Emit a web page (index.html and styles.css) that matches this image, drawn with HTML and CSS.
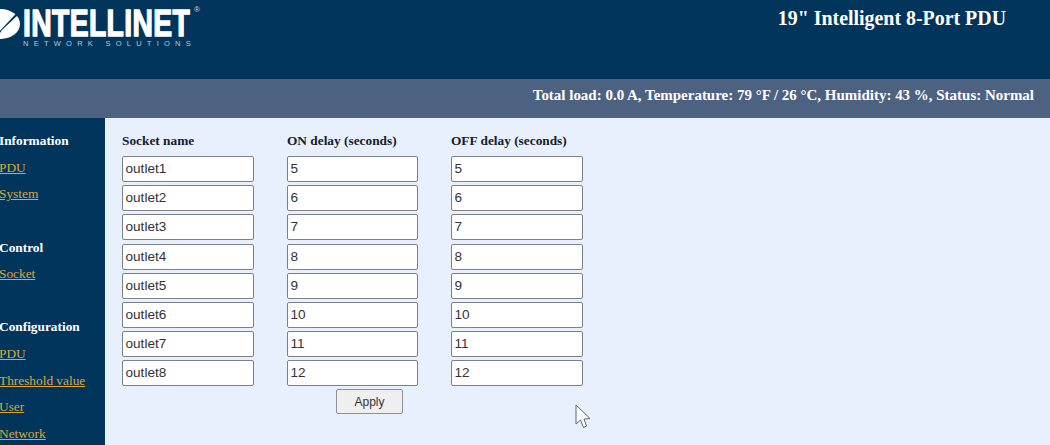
FILE: index.html
```html
<!DOCTYPE html>
<html lang="en">
<head>
<meta charset="utf-8">
<title>19" Intelligent 8-Port PDU</title>
<link rel="stylesheet" href="styles.css">
</head>
<body>
<header class="header">
  <div class="logo">
    <svg class="logo-mark" width="20" height="40" viewBox="0 0 20 40" aria-hidden="true">
      <ellipse cx="1" cy="24" rx="19" ry="15" fill="#fff"/>
      <path d="M-2 33 L18 11.5 L19 14 L2 30 L-2 36 Z" fill="#02355b"/>
    </svg>
    <div class="logo-text">
      <div class="logo-name">INTELLINET</div>
      <div class="logo-reg">®</div>
      <div class="logo-sub">NETWORK SOLUTIONS</div>
    </div>
  </div>
  <h1 class="title">19" Intelligent 8-Port PDU</h1>
</header>
<div class="status">Total load: 0.0 A, Temperature: 79 °F / 26 °C, Humidity: 43 %, Status: Normal</div>
<div class="body">
  <nav class="nav">
    <div class="nav-group">
      <div class="nav-head">Information</div>
      <a class="nav-link" href="#">PDU</a>
      <a class="nav-link" href="#">System</a>
    </div>
    <div class="nav-group">
      <div class="nav-head">Control</div>
      <a class="nav-link" href="#">Socket</a>
    </div>
    <div class="nav-group">
      <div class="nav-head">Configuration</div>
      <a class="nav-link" href="#">PDU</a>
      <a class="nav-link" href="#">Threshold value</a>
      <a class="nav-link" href="#">User</a>
      <a class="nav-link" href="#">Network</a>
    </div>
  </nav>
  <main class="main">
    <form class="grid">
      <div class="col-head">Socket name</div>
      <div class="col-head">ON delay (seconds)</div>
      <div class="col-head">OFF delay (seconds)</div>
      <input class="field" value="outlet1"><input class="field" value="5"><input class="field" value="5">
      <input class="field" value="outlet2"><input class="field" value="6"><input class="field" value="6">
      <input class="field" value="outlet3"><input class="field" value="7"><input class="field" value="7">
      <input class="field" value="outlet4"><input class="field" value="8"><input class="field" value="8">
      <input class="field" value="outlet5"><input class="field" value="9"><input class="field" value="9">
      <input class="field" value="outlet6"><input class="field" value="10"><input class="field" value="10">
      <input class="field" value="outlet7"><input class="field" value="11"><input class="field" value="11">
      <input class="field" value="outlet8"><input class="field" value="12"><input class="field" value="12">
      <div class="actions"><button class="apply" type="button">Apply</button></div>
    </form>
    <svg class="cursor" width="17" height="25" viewBox="0 0 17 25" aria-hidden="true">
      <path d="M1 1 L1 20 L5.5 16 L8.5 23.5 L11.5 22 L9 15 L15 14.5 Z" fill="#fff" stroke="#5f6670" stroke-width="1"/>
    </svg>
  </main>
</div>
</body>
</html>
```
FILE: styles.css
```css
* { box-sizing: border-box; }
html, body { margin: 0; height: 100%; overflow: hidden; }
body { font-family: "Liberation Serif", serif; background: #e8f0fd; display: flex; flex-direction: column; }

.header { height: 79px; background: #02355b; display: flex; justify-content: space-between; flex: none; }
.logo { display: flex; align-items: flex-start; height: 48px; }
.logo-mark { flex: none; }
.logo-text { margin-left: 3px; color: #fff; position: relative; width: 172px; }
.logo-name { font-family: "Liberation Sans", sans-serif; font-weight: 700; font-size: 36px; line-height: 28px; height: 28px; margin-top: 10px; width: 169px; white-space: nowrap; transform-origin: 0 50%; transform: scaleX(.785); -webkit-text-stroke: 1.4px #fff; letter-spacing: .5px; }
.logo-reg { position: absolute; left: 171px; top: 6px; font-family: "Liberation Sans", sans-serif; font-size: 8px; line-height: 8px; color: #cfd8e2; }
.logo-sub { font-family: "Liberation Sans", sans-serif; font-size: 7.5px; line-height: 9px; margin-top: 1px; width: 169px; letter-spacing: 5.25px; color: #b9c7d6; white-space: nowrap; }
.title { margin: 6px 44px 0 0; font-size: 19.9px; line-height: 24px; font-weight: 700; color: #fff; }

.status { height: 39px; flex: none; background: #4d6280; color: #fff; font-weight: 700; font-size: 14.97px; line-height: 33px; text-align: right; padding-right: 16px; }

.body { flex: 1; display: flex; min-height: 0; }
.nav { width: 105px; flex: none; background: #02355b; padding: 15.3px 0 0; }
.nav-group { display: flex; flex-direction: column; margin-bottom: 26.6px; align-items: flex-start; }
.nav-head, .nav-link { height: 26.6px; line-height: 16px; font-size: 13.33px; font-weight: 700; white-space: nowrap; margin-left: -1px; }
.nav-head { color: #fff; }
.nav-link { color: #dba63f; font-weight: 400; }

.main { flex: 1; position: relative; padding: 15px 0 0 17px; }
.grid { display: grid; grid-template-columns: 132px 131px 132px; column-gap: 33px; row-gap: 3.15px; align-items: start; }
.col-head { font-size: 13.33px; font-weight: 700; line-height: 16px; height: 20px; color: #14202c; white-space: nowrap; }
.field { width: 100%; height: 26px; padding: 0 2.5px 1px; border: 1px solid #7d7f86; border-radius: 2px; background: #fff; font-family: "Liberation Sans", sans-serif; font-size: 13.6px; color: #333; outline: none; }
.actions { grid-column: 1 / -1; display: flex; padding-left: 214px; }
.apply { width: 67px; height: 25px; padding: 0; border: 1px solid #8d9096; border-radius: 2px; background: #efefef; font-family: "Liberation Sans", sans-serif; font-size: 12px; color: #333; }
.cursor { position: absolute; left: 470px; top: 286px; }
```
